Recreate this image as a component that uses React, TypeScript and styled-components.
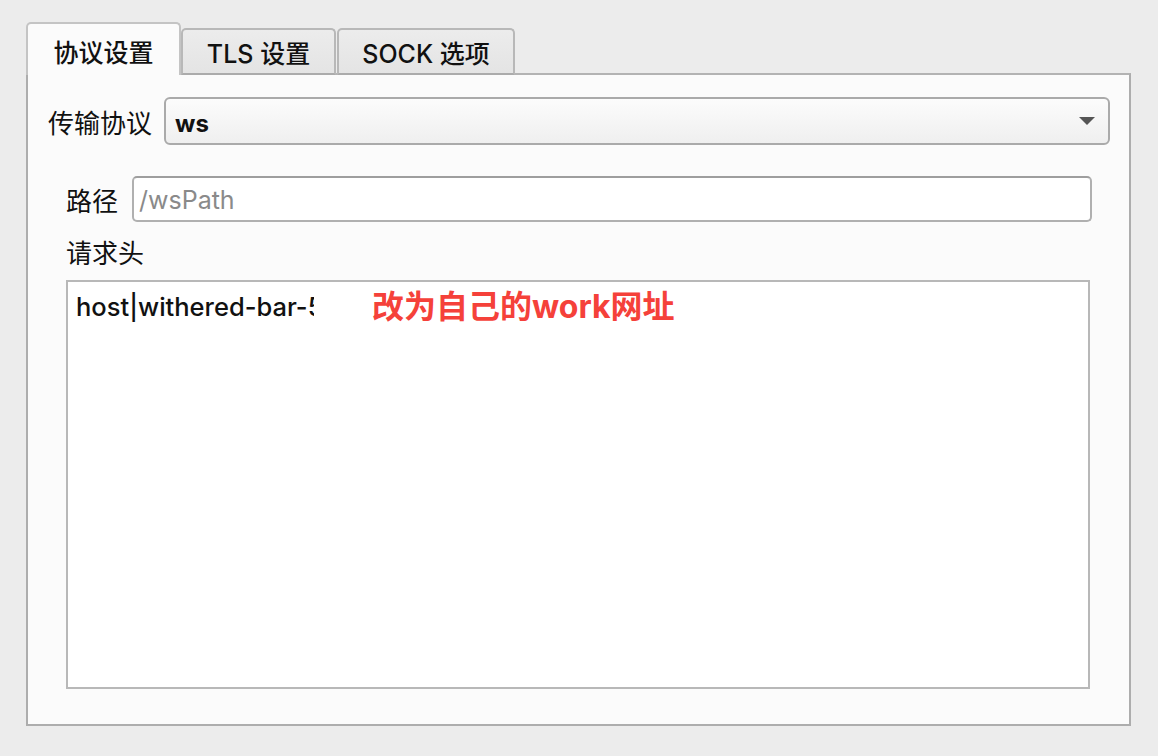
import styled, { createGlobalStyle } from 'styled-components';

const GlobalStyle = createGlobalStyle`
  html, body {
    margin: 0;
    padding: 0;
    background: #ececec;
  }
  body {
    font-family: Inter, "Noto Sans CJK SC", sans-serif;
    color: #111;
  }
`;

const tabs = ['协议设置', 'TLS 设置', 'SOCK 选项'];

const App = () => {
  return (
    <>
      <GlobalStyle />
      <Window>
        <TabBar>
          {tabs.map((t, i) => (
            <Tab key={t} $active={i === 0} $width={i === 2 ? 178 : 155}>
              {t}
            </Tab>
          ))}
        </TabBar>
        <Pane>
          <SelectRow>
            <Label>传输协议</Label>
            <Select>
              <span className="value">ws</span>
              <Caret />
            </Select>
          </SelectRow>
          <Section>
            <FieldRow>
              <Label>路径</Label>
              <TextInput placeholder="/wsPath" readOnly />
            </FieldRow>
            <Label className="header-label">请求头</Label>
            <TextArea>
              <span className="line">host|withered-bar-5</span>
              <Annotation>改为自己的work网址</Annotation>
            </TextArea>
          </Section>
        </Pane>
      </Window>
    </>
  );
};

export default App;

const Window = styled.div`
  width: 1105px;
  padding: 24px 0 0 26px;
  display: flex;
  flex-direction: column;
`;

const TabBar = styled.div`
  display: flex;
  align-items: flex-end;
  height: 51px;
  position: relative;
  z-index: 1;
  margin-bottom: -2px;
`;

const Tab = styled.div<{ $active?: boolean; $width: number }>`
  width: ${(p) => p.$width}px;
  box-sizing: border-box;
  height: ${(p) => (p.$active ? 53 : 47)}px;
  margin-right: ${(p) => (p.$active ? 0 : 1)}px;
  display: flex;
  align-items: center;
  justify-content: center;
  padding-top: ${(p) => (p.$active ? 2 : 0)}px;
  font-size: 25px;
  font-weight: 500;
  color: #111;
  background: ${(p) =>
    p.$active ? '#fbfbfb' : 'linear-gradient(#ececec, #e4e4e4)'};
  border: 2px solid ${(p) => (p.$active ? '#c4c4c4' : '#b8b8b8')};
  border-bottom: ${(p) => (p.$active ? 'none' : '2px solid #ababab')};
  border-radius: 5px 5px 0 0;
`;

const Pane = styled.div`
  box-sizing: border-box;
  height: 653px;
  background: #fbfbfb;
  border: 2px solid #adadad;
  border-top-color: #b3b3b3;
  box-shadow: 0 2px 0 #dedede;
  padding: 22px 19px 0 20px;
  display: flex;
  flex-direction: column;
`;

const SelectRow = styled.div`
  display: flex;
  align-items: center;
  gap: 12px;
`;

const Label = styled.div`
  font-size: 26px;
  color: #111;
  white-space: nowrap;

  &.header-label {
    margin-top: 16px;
    line-height: 32px;
  }
`;

const Select = styled.div`
  flex: 1;
  box-sizing: border-box;
  height: 48px;
  border: 2px solid #aaaaaa;
  border-radius: 6px;
  background: linear-gradient(#fcfcfc, #efefef);
  display: flex;
  align-items: center;
  justify-content: space-between;
  padding: 4px 13px 0 9px;

  .value {
    font-size: 24px;
    font-weight: 700;
    color: #111;
  }
`;

const Caret = styled.span`
  width: 0;
  height: 0;
  margin-top: -4px;
  border-left: 8px solid transparent;
  border-right: 8px solid transparent;
  border-top: 8px solid #555;
`;

const Section = styled.div`
  display: flex;
  flex-direction: column;
  padding: 31px 18px 0 18px;
`;

const FieldRow = styled.div`
  display: flex;
  align-items: center;
  gap: 14px;
`;

const TextInput = styled.input`
  flex: 1;
  box-sizing: border-box;
  height: 46px;
  border: 2px solid #b0b0b0;
  border-top-color: #9e9e9e;
  border-radius: 5px;
  background: #fff;
  padding: 2px 5px 0;
  font-family: Inter, "Noto Sans CJK SC", sans-serif;
  font-size: 25px;
  outline: none;

  &::placeholder {
    color: #8a8a8a;
  }
`;

const TextArea = styled.div`
  position: relative;
  box-sizing: border-box;
  height: 409px;
  margin-top: 10px;
  width: 1024px;
  background: #fff;
  border: 2px solid #b8b8b8;
  padding: 10px 8px;

  .line {
    display: inline-block;
    width: 238px;
    overflow: hidden;
    white-space: nowrap;
    font-size: 25.5px;
    font-weight: 500;
    line-height: 30px;
    color: #111;
  }
`;

const Annotation = styled.span`
  position: absolute;
  left: 304px;
  top: -1px;
  font-size: 32px;
  font-weight: 700;
  color: #f5413a;
  white-space: nowrap;
`;
